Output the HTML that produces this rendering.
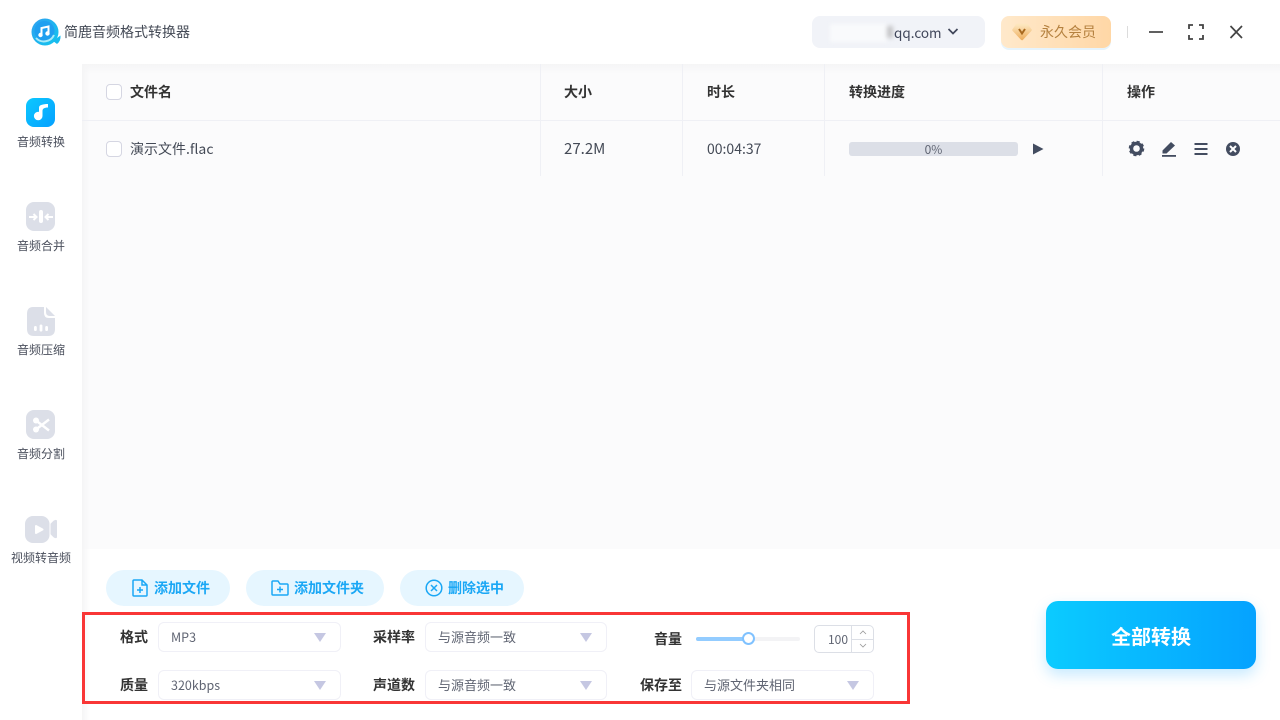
<!DOCTYPE html>
<html lang="zh"><head><meta charset="utf-8"><style>
*{box-sizing:border-box}
html,body{margin:0;padding:0}
body{width:1280px;height:720px;overflow:hidden;background:#fff;position:relative;font-family:"Noto Sans CJK SC","Liberation Sans",sans-serif;color:#333}
.a{position:absolute;white-space:nowrap}
.nav{font-size:12px;color:#4a4f5c;width:82px;text-align:center;left:0;line-height:16px}
.ic{position:absolute;left:26px;width:29px;height:29px;border-radius:8px;background:#dcdfe8}
.th{font-size:14px;font-weight:700;color:#333;line-height:18px;top:83px}
.sep{position:absolute;width:1px;background:#eff0f5;top:64px;height:112px}
.btn{position:absolute;top:570px;height:36px;border-radius:18px;background:#e6f6ff;color:#1aa7f5;font-size:14px;font-weight:700;line-height:36px}
.lb{font-size:14px;font-weight:700;color:#333;line-height:18px}
.sel{position:absolute;height:30px;border:1px solid #f0f0f7;border-radius:6px;background:#fff;font-size:13px;color:#5f6472;line-height:28px;padding-left:12px}
.sel b{font-weight:400;font-size:12.500px}
.sel i{position:absolute;right:14px;top:10px;width:0;height:0;border-left:6px solid transparent;border-right:6px solid transparent;border-top:9px solid #c5c7e2}
</style></head><body>
<div class="a" style="left:82px;top:64px;width:1198px;height:485px;background:#fbfbfc"></div>
<div class="a" style="left:82px;top:64px;width:8px;height:656px;background:linear-gradient(90deg,#f5f5f6,rgba(250,250,250,0))"></div>
<div class="a" style="left:0;top:64px;width:1280px;height:10px;background:linear-gradient(#f5f5f6,rgba(251,251,252,0))"></div>
<div class="a" style="left:0;top:64px;width:82px;height:656px;background:#fff"></div>

<svg class="a" style="left:31px;top:17px" width="30" height="30" viewBox="0 0 30 30"><defs><linearGradient id="l" x1="0" y1="0" x2="1" y2="1"><stop offset="0" stop-color="#2fa0f0"/><stop offset="1" stop-color="#12c6ee"/></linearGradient></defs><circle cx="14" cy="15" r="13.500" fill="url(#l)"/><path d="M22 24 L29.500 18.500 Q30 24 26 27Z" fill="#18bbee"/><circle cx="13.500" cy="14" r="10" fill="#1f9ff0"/><path d="M5 21 A11 11 0 0 0 23 18" stroke="#a8ebf9" stroke-width="2" fill="none"/><path d="M10.500 18 V11 L17.500 9.500 V16.500" stroke="#fff" stroke-width="2" fill="none"/><circle cx="9.500" cy="18" r="2.200" fill="#fff"/><circle cx="16.500" cy="16.500" r="2.200" fill="#fff"/></svg>
<div class="a" style="left:64px;top:23px;font-size:14px;line-height:18px;color:#444a56">简鹿音频格式转换器</div>

<div class="a" style="left:812px;top:16px;width:173px;height:32px;border-radius:8px;background:#f1f3f8"></div>
<div class="a" style="left:830px;top:24px;width:58px;height:18px;background:#f9fafc;filter:blur(2px)"></div>
<div class="a" style="left:887px;top:26px;width:6px;height:12px;background:#c4c4c6;filter:blur(2px)"></div>
<div class="a" style="left:894px;top:23px;font-size:13.500px;line-height:18px;color:#40465a">qq.com</div>
<svg class="a" style="left:947px;top:27px" width="12" height="9" viewBox="0 0 12 9"><path d="M1.500 2 L6 6.500 L10.500 2" fill="none" stroke="#40465a" stroke-width="1.700"/></svg>
<div class="a" style="left:1001px;top:16px;width:110px;height:32px;border-radius:8px;background:linear-gradient(90deg,#ffe9cb,#ffd7a6);box-shadow:0 2px 0 #e6f4fd"></div>
<svg class="a" style="left:1012px;top:23px" width="20" height="18" viewBox="0 0 20 18"><defs><linearGradient id="d" x1="0" y1="0" x2="0" y2="1"><stop offset="0" stop-color="#fde6bd"/><stop offset="1" stop-color="#eeb062"/></linearGradient></defs><path d="M5 2 H15 L18.500 7 L10 16 L1.500 7Z" fill="url(#d)" stroke="url(#d)" stroke-width="2.500" stroke-linejoin="round"/><path d="M7 6 L10 10.500 L13 6" fill="none" stroke="#a8691f" stroke-width="2"/></svg>
<div class="a" style="left:1040px;top:23px;font-size:14px;line-height:18px;color:#b5813f">永久会员</div>
<div class="a" style="left:1127px;top:26px;width:1px;height:12px;background:#dcdcdc"></div>
<svg class="a" style="left:1148px;top:23px" width="100" height="18" viewBox="0 0 100 18"><path d="M1 9 H15" stroke="#444" stroke-width="1.700"/><path d="M41 6 V2 H45 M51 2 H55 V6 M55 12 V16 H51 M45 16 H41 V12" fill="none" stroke="#444" stroke-width="1.800"/><path d="M82.500 3 L94 15 M94 3 L82.500 15" stroke="#444" stroke-width="1.700"/></svg>

<div class="ic" style="top:98px;background:linear-gradient(135deg,#0cc8ff,#05a0ff)"></div>
<svg class="a" style="left:33px;top:104px" width="16" height="18" viewBox="0 0 16 18"><path d="M6 3.500 C6 1 10 0 15 0 V3.500 C11.500 3.500 9.500 4.500 9.500 7 V12 H6Z" fill="#fff"/><circle cx="5.200" cy="12" r="4.300" fill="#fff"/></svg>
<div class="a nav" style="top:134px">音频转换</div>

<div class="ic" style="top:202px"></div>
<svg class="a" style="left:28px;top:206px" width="26" height="22" viewBox="0 0 26 22"><rect x="11" y="4" width="4" height="13" rx="2" fill="#fff"/><path d="M1 11 H8 M5.500 8 L8.500 11 L5.500 14 M25 11 H18 M20.500 8 L17.500 11 L20.500 14" stroke="#fff" stroke-width="2" fill="none"/></svg>
<div class="a nav" style="top:238px">音频合并</div>

<svg class="a" style="left:26px;top:307px" width="30" height="30" viewBox="0 0 30 30"><path d="M7 0 H18 V6 Q18 11 23 11 H29 V22 Q29 29 22 29 H8 Q1 29 1 22 V7 Q1 0 7 0Z" fill="#dcdfe8"/><path d="M20 0 L29 9 H24 Q20 9 20 5Z" fill="#dcdfe8"/><rect x="8" y="19" width="2.800" height="5" rx="1.400" fill="#fff"/><rect x="13.600" y="17.500" width="2.800" height="7" rx="1.400" fill="#fff"/><rect x="19.200" y="19" width="2.800" height="5" rx="1.400" fill="#fff"/></svg>
<div class="a nav" style="top:342px">音频压缩</div>

<div class="ic" style="top:410px"></div>
<svg class="a" style="left:31px;top:415px" width="20" height="20" viewBox="0 0 20 20"><path d="M5 5.500 L18 15.500 M5 14.500 L18 4.500" stroke="#fff" stroke-width="2.400"/><circle cx="5" cy="5.500" r="3" fill="#fff"/><circle cx="5" cy="14.500" r="3" fill="#fff"/></svg>
<div class="a nav" style="top:446px">音频分割</div>

<svg class="a" style="left:25px;top:515px" width="32" height="29" viewBox="0 0 32 29"><rect x="0" y="1" width="24.500" height="27" rx="8" fill="#dcdfe8"/><path d="M26 9 L29 6 Q32 4 32 8 V20 Q32 24 29 22 L26 19Z" fill="#dcdfe8" stroke="#dcdfe8" stroke-linejoin="round"/><path d="M11 11 L17.500 14.500 L11 18Z" fill="#fff" stroke="#fff" stroke-width="2" stroke-linejoin="round"/></svg>
<div class="a nav" style="top:550px">视频转音频</div>

<div class="a" style="left:82px;top:120px;width:1198px;height:1px;background:#eff0f5"></div>
<div class="sep" style="left:540px"></div><div class="sep" style="left:682px"></div><div class="sep" style="left:824px"></div><div class="sep" style="left:1102px"></div>
<div class="a" style="left:106px;top:84px;width:16px;height:16px;border:1px solid #d5d6e2;border-radius:4px;background:#fff"></div>
<div class="a th" style="left:130px">文件名</div>
<div class="a th" style="left:564px">大小</div>
<div class="a th" style="left:707px">时长</div>
<div class="a th" style="left:849px">转换进度</div>
<div class="a th" style="left:1127px">操作</div>
<div class="a" style="left:106px;top:141px;width:16px;height:16px;border:1px solid #d5d6e2;border-radius:4px;background:#fff"></div>
<div class="a" style="left:130px;top:140px;font-size:14px;line-height:18px;color:#444a56">演示文件.flac</div>
<div class="a" style="left:564px;top:140px;font-size:15px;line-height:18px;color:#444a56">27.2M</div>
<div class="a" style="left:707px;top:140px;font-size:14px;line-height:18px;color:#444a56">00:04:37</div>
<div class="a" style="left:849px;top:142px;width:169px;height:14px;border-radius:3px;background:#dcdfe7;text-align:center;font-size:12px;line-height:16px;color:#5f6472">0%</div>
<svg class="a" style="left:1032px;top:142px" width="13" height="14" viewBox="0 0 13 14"><path d="M1 1.500 L11.500 7 L1 12.500Z" fill="#434c60"/></svg>
<svg class="a" style="left:1128px;top:140px" width="118" height="18" viewBox="0 0 118 18" fill="#434c60">
<circle cx="8.500" cy="8.500" r="5" fill="none" stroke="#434c60" stroke-width="3.400"/><circle cx="8.500" cy="8.500" r="6" fill="none" stroke="#434c60" stroke-width="3.600" stroke-dasharray="2.700 2"/>
<path d="M34.500 10.500 L43 2 L47 5.500 L38.500 13.500 L34.500 13.500Z"/><rect x="34" y="15" width="14" height="1.800"/>
<rect x="66.500" y="3" width="13" height="2"/><rect x="66.500" y="8" width="13" height="2"/><rect x="66.500" y="13" width="13" height="2"/>
<circle cx="105" cy="9" r="7"/><path d="M102 6 L108 12 M108 6 L102 12" stroke="#fff" stroke-width="2"/></svg>

<div class="btn" style="left:106px;width:124px;padding-left:48px">添加文件</div>
<svg class="a" style="left:131px;top:579px" width="18" height="18" viewBox="0 0 18 18"><path d="M11 1 H3 Q2 1 2 2 V16 Q2 17 3 17 H15 Q16 17 16 16 V6Z M11 1 V6 H16" fill="none" stroke="#1aa7f5" stroke-width="1.500"/><path d="M9 8 V14 M6 11 H12" stroke="#1aa7f5" stroke-width="1.500"/></svg>
<div class="btn" style="left:246px;width:138px;padding-left:48px">添加文件夹</div>
<svg class="a" style="left:271px;top:579px" width="18" height="18" viewBox="0 0 18 18"><path d="M1 3 Q1 2 2 2 H7 L9 5 H16 Q17 5 17 6 V15 Q17 16 16 16 H2 Q1 16 1 15Z" fill="none" stroke="#1aa7f5" stroke-width="1.500"/><path d="M9 7.500 V13.500 M6 10.500 H12" stroke="#1aa7f5" stroke-width="1.500"/></svg>
<div class="btn" style="left:400px;width:124px;padding-left:48px">删除选中</div>
<svg class="a" style="left:425px;top:579px" width="18" height="18" viewBox="0 0 18 18"><circle cx="9" cy="9" r="7.800" fill="none" stroke="#1aa7f5" stroke-width="1.500"/><path d="M6 6 L12 12 M12 6 L6 12" stroke="#1aa7f5" stroke-width="1.500"/></svg>

<div class="a" style="left:82px;top:612px;width:828px;height:92px;border:3px solid #f93636"></div>
<div class="a lb" style="left:120px;top:628px">格式</div>
<div class="sel" style="left:158px;top:622px;width:183px"><b>MP3</b><i></i></div>
<div class="a lb" style="left:373px;top:628px">采样率</div>
<div class="sel" style="left:425px;top:622px;width:182px">与源音频一致<i></i></div>
<div class="a lb" style="left:654px;top:630px">音量</div>
<div class="a" style="left:696px;top:637px;width:104px;height:4px;border-radius:2px;background:#f3f3f5"></div>
<div class="a" style="left:696px;top:637px;width:50px;height:4px;border-radius:2px;background:#93ccff"></div>
<div class="a" style="left:742px;top:632px;width:13px;height:13px;border-radius:50%;background:#fff;border:2px solid #80c2ff"></div>
<div class="a" style="left:814px;top:625px;width:60px;height:28px;border:1px solid #dcdfe6;border-radius:5px;background:#fff;font-size:12px;line-height:28px;color:#5f6472;padding-left:13px">100</div>
<div class="a" style="left:851px;top:626px;width:1px;height:26px;background:#dcdfe6"></div>
<div class="a" style="left:851px;top:639px;width:22px;height:1px;background:#dcdfe6"></div>
<svg class="a" style="left:858px;top:629px" width="10" height="22" viewBox="0 0 10 22"><path d="M2 5 L5 2 L8 5 M2 15 L5 18 L8 15" fill="none" stroke="#999" stroke-width=".8"/></svg>
<div class="a lb" style="left:120px;top:676px">质量</div>
<div class="sel" style="left:158px;top:670px;width:183px"><b>320kbps</b><i></i></div>
<div class="a lb" style="left:373px;top:676px">声道数</div>
<div class="sel" style="left:425px;top:670px;width:182px">与源音频一致<i></i></div>
<div class="a lb" style="left:640px;top:676px">保存至</div>
<div class="sel" style="left:691px;top:670px;width:183px">与源文件夹相同<i></i></div>

<div class="a" style="left:1046px;top:601px;width:210px;height:68px;border-radius:12px;background:linear-gradient(90deg,#0bcbff,#05a2ff);box-shadow:0 6px 14px rgba(30,170,255,.25);color:#fff;font-size:20px;font-weight:700;text-align:center;line-height:70px">全部转换</div>
</body></html>
